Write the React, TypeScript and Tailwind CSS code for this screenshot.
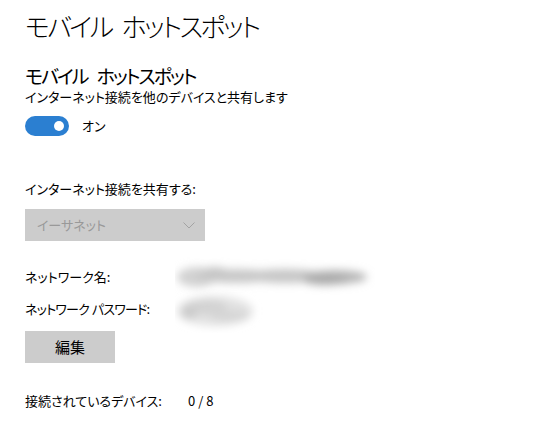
import React from "react";

const jp = "font-['Noto_Sans_CJK_JP','Noto_Sans',sans-serif] [font-feature-settings:'palt']";

function Smudge1() {
  return (
    <svg width="200" height="40" viewBox="0 0 200 40" className="block">
      <defs>
        <filter id="b1" x="-20%" y="-50%" width="140%" height="200%">
          <feGaussianBlur stdDeviation="4" />
        </filter>
      </defs>
      <g filter="url(#b1)">
        <ellipse cx="22" cy="20" rx="20" ry="10" fill="#d2d2d2" />
        <ellipse cx="60" cy="19" rx="40" ry="7" fill="#c8c8c8" />
        <ellipse cx="110" cy="19" rx="40" ry="7" fill="#c6c6c6" />
        <ellipse cx="160" cy="20" rx="32" ry="7" fill="#b6b6b6" />
        <ellipse cx="150" cy="23" rx="22" ry="5" fill="#a8a8a8" />
        <ellipse cx="40" cy="15" rx="12" ry="5" fill="#c4c4c4" />
      </g>
    </svg>
  );
}

function Smudge2() {
  return (
    <svg width="100" height="44" viewBox="0 0 100 44" className="block">
      <defs>
        <filter id="b2" x="-30%" y="-50%" width="160%" height="200%">
          <feGaussianBlur stdDeviation="4" />
        </filter>
      </defs>
      <g filter="url(#b2)">
        <ellipse cx="40" cy="22" rx="38" ry="15" fill="#e2e2e2" />
        <ellipse cx="30" cy="18" rx="22" ry="7" fill="#d2d2d2" />
        <ellipse cx="55" cy="27" rx="20" ry="6" fill="#d6d6d6" />
        <ellipse cx="14" cy="24" rx="8" ry="6" fill="#cacaca" />
      </g>
    </svg>
  );
}

export default function App() {
  return (
    <div className={`w-[551px] h-[428px] bg-white text-black overflow-hidden ${jp}`}>
      <div className="pl-[25px] pt-[8px]">
        <div className="flex text-[26px] leading-[36px] tracking-[-2.5px] font-light">
          <span>モバイル</span>
          <span className="ml-[10px]">ホットスポット</span>
        </div>
        <div className="mt-[20px] flex text-[19px] leading-[24px] tracking-[-2px]">
          <span>モバイル</span>
          <span className="ml-[9px]">ホットスポット</span>
        </div>
        <div className="mt-[0px] text-[13px] leading-[18px]">インターネット接続を他のデバイスと共有します</div>
        <div className="mt-[10px] flex items-center gap-[13px]">
          <div className="w-[44px] h-[20px] rounded-full bg-[#2b7fd1] flex items-center justify-end pr-[5px]">
            <div className="w-[10px] h-[10px] rounded-full bg-white" />
          </div>
          <span className="text-[13px] leading-[20px]">オン</span>
        </div>
        <div className="mt-[44px] text-[13px] leading-[18px]">インターネット接続を共有する:</div>
        <div className="mt-[11px] w-[180px] h-[32px] bg-[#cccccc] flex items-center justify-between pl-[12px] pr-[10px]">
          <span className="text-[13px] text-[#999999]">イーサネット</span>
          <svg width="12" height="7" viewBox="0 0 12 7" fill="none">
            <path d="M0.5 0.5 L6 6 L11.5 0.5" stroke="#a3a3a3" strokeWidth="1" />
          </svg>
        </div>
        <div className="mt-[26px] flex items-center h-[20px]">
          <span className="w-[150px] text-[13px] leading-[20px]">ネットワーク名:</span>
          <div className="relative w-[200px] h-[20px]">
            <div className="absolute left-0 top-[-10px]">
              <Smudge1 />
            </div>
          </div>
        </div>
        <div className="mt-[12px] flex items-center h-[20px]">
          <span className="flex w-[150px] text-[13px] leading-[20px] tracking-[-0.8px]">
            <span>ネットワーク</span>
            <span className="ml-[3px]">パスワード:</span>
          </span>
          <div className="relative w-[100px] h-[20px]">
            <div className="absolute left-0 top-[-10px]">
              <Smudge2 />
            </div>
          </div>
        </div>
        <div className="mt-[12px] w-[90px] h-[32px] bg-[#cccccc] flex items-center justify-center text-[15px]">編集</div>
        <div className="mt-[28px] flex items-center text-[13px] leading-[20px]">
          <span className="w-[163px]">接続されているデバイス:</span>
          <span>0 / 8</span>
        </div>
      </div>
    </div>
  );
}
